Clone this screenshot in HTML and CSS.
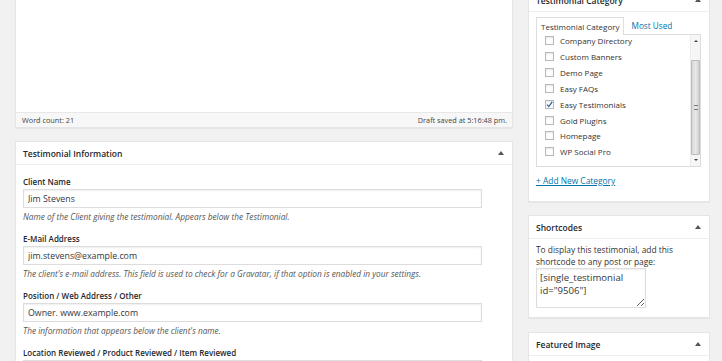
FILE: index.html
```html
<!DOCTYPE html>
<html lang="en">
<head>
    <meta charset="UTF-8">
    <title>Edit Testimonial</title>
    <link rel="stylesheet" href="styles.css">
</head>
<body>

    <div class="wrap">

        <!-- Main column -->
        <div class="main">

            <!-- Editor -->
            <div class="editor">
                <div class="editor-area"></div>
                <div class="status">
                    <span>Word count: 21</span>
                    <span>Draft saved at 5:16:48 pm.</span>
                </div>
            </div>

            <!-- Testimonial Information -->
            <div class="postbox">
                <div class="postbox-head">
                    <h2>Testimonial Information</h2>
                    <span class="toggle"></span>
                </div>
                <div class="fields">
                    <div class="field">
                        <label>Client Name</label>
                        <input type="text" value="Jim Stevens">
                        <p>Name of the Client giving the testimonial. Appears below the Testimonial.</p>
                    </div>
                    <div class="field">
                        <label>E-Mail Address</label>
                        <input type="text" value="jim.stevens@example.com">
                        <p>The client's e-mail address. This field is used to check for a Gravatar, if that option is enabled in your settings.</p>
                    </div>
                    <div class="field">
                        <label>Position / Web Address / Other</label>
                        <input type="text" value="Owner. www.example.com">
                        <p>The information that appears below the client's name.</p>
                    </div>
                    <div class="field">
                        <label>Location Reviewed / Product Reviewed / Item Reviewed</label>
                        <input type="text" value="">
                    </div>
                </div>
            </div>
        </div>

        <!-- Sidebar -->
        <div class="side">

            <div class="postbox">
                <div class="postbox-head side-head">
                    <h2>Testimonial Category</h2>
                    <span class="toggle"></span>
                </div>
                <div class="cat-body">
                    <div class="tabs">
                        <span class="tab-active">Testimonial Category</span>
                        <a class="tab-link">Most Used</a>
                    </div>
                    <div class="panel">
                        <ul class="cats">
                            <li><span class="cb"></span>Company Directory</li>
                            <li><span class="cb"></span>Custom Banners</li>
                            <li><span class="cb"></span>Demo Page</li>
                            <li><span class="cb"></span>Easy FAQs</li>
                            <li><span class="cb"><svg width="9" height="9" viewBox="0 0 9 9"><path d="M2 4.6 L3.8 6.6 L7.2 1.8" fill="none" stroke="#2a5a8c" stroke-width="1.2"/></svg></span>Easy Testimonials</li>
                            <li><span class="cb"></span>Gold Plugins</li>
                            <li><span class="cb"></span>Homepage</li>
                            <li><span class="cb"></span>WP Social Pro</li>
                        </ul>
                        <div class="scrollbar">
                            <div class="sb-btn"><span class="sb-up"></span></div>
                            <div class="sb-track">
                                <div class="sb-thumb"><span class="grip"></span></div>
                            </div>
                            <div class="sb-btn"><span class="sb-down"></span></div>
                        </div>
                    </div>
                    <a class="add-new">+ Add New Category</a>
                </div>
            </div>

            <div class="postbox shortcodes">
                <div class="postbox-head side-head">
                    <h2>Shortcodes</h2>
                    <span class="toggle"></span>
                </div>
                <div class="sc-body">
                    <p>To display this testimonial, add this shortcode to any post or page:</p>
                    <textarea readonly>[single_testimonial id="9506"]</textarea>
                </div>
            </div>

            <div class="postbox">
                <div class="postbox-head side-head">
                    <h2>Featured Image</h2>
                    <span class="toggle"></span>
                </div>
                <div class="fi-body"></div>
            </div>
        </div>
    </div>

</body>
</html>
```

FILE: styles.css
```css
body { margin: 0; background: #f1f1f1; font-family: "Open Sans", "Noto Sans", sans-serif; font-size: 8px; color: #333; overflow: hidden; }
.wrap { display: flex; align-items: flex-start; gap: 15px; padding-left: 15px; margin-top: -12px; }
.main { width: 498px; }
.side { width: 182px; }

/* editor */
.editor { background: #fff; border: 1px solid #e5e5e5; box-shadow: 0 1px 1px rgba(0,0,0,.04); margin-bottom: 13px; }
.editor-area { height: 123px; }
.status { display: flex; justify-content: space-between; height: 14px; line-height: 14px; padding: 0 5px 0 6px; background: #f7f7f7; border-top: 1px solid #e8e8e8; font-size: 7.3px; color: #444; }

/* boxes */
.postbox { background: #fff; border: 1px solid #e5e5e5; box-shadow: 0 1px 1px rgba(0,0,0,.04); margin-bottom: 13px; }
.postbox-head { display: flex; justify-content: space-between; align-items: center; height: 22px; padding: 0 8px 0 7px; border-bottom: 1px solid #eee; }
.postbox-head h2 { margin: 0; font-size: 8.5px; font-weight: 600; color: #23282d; }
.side-head { padding-right: 8px; }
.toggle { width: 0; height: 0; border-left: 3px solid transparent; border-right: 3px solid transparent; border-bottom: 4px solid #555; }

/* testimonial fields */
.fields { padding: 11px 7px 0 7px; }
.field label { display: block; font-size: 8px; font-weight: 600; line-height: 12px; color: #23282d; margin-bottom: 1px; }
.field input { display: block; box-sizing: border-box; width: 459px; height: 19px; margin: 0; padding: 0 4px; border: 1px solid #ddd; box-shadow: inset 0 1px 2px rgba(0,0,0,.07); font-family: inherit; font-size: 8.8px; color: #32373c; background: #fff; }
.field p { margin: 3px 0 10px; font-size: 8.3px; font-style: italic; line-height: 12px; color: #555; }

/* category */
.cat-body { padding: 5px 8px 14px 7px; }
.tabs { display: flex; align-items: flex-end; height: 17px; }
.tab-active { position: relative; z-index: 1; background: #fff; border: 1px solid #dfdfdf; border-bottom: none; padding: 0 3px 0 4px; line-height: 17px; margin-bottom: -1px; color: #333; }
.tab-link { margin-left: 8px; line-height: 16px; font-size: 8.2px; color: #0073aa; }
.panel { display: flex; box-sizing: border-box; width: 165px; height: 133px; border: 1px solid #ddd; background: #fff; overflow: hidden; }
.cats { flex: 1; list-style: none; margin: -2px 0 0; padding: 0 0 0 8px; }
.cats li { display: flex; align-items: center; gap: 6px; height: 15.85px; font-size: 8px; color: #333; }
.cb { display: block; box-sizing: border-box; width: 9px; height: 9px; border: 1px solid #b4b9be; background: #fff; box-shadow: inset 0 1px 2px rgba(0,0,0,.1); }
.cb svg { display: block; margin: -1px 0 0 -1px; }

/* scrollbar */
.scrollbar { display: flex; flex-direction: column; width: 9px; background: #f6f6f6; border-left: 1px solid #ececec; }
.sb-btn { display: flex; align-items: center; justify-content: center; height: 12px; }
.sb-up { width: 0; height: 0; border-left: 2px solid transparent; border-right: 2px solid transparent; border-bottom: 2px solid #444; }
.sb-down { width: 0; height: 0; border-left: 2px solid transparent; border-right: 2px solid transparent; border-top: 2px solid #444; }
.sb-track { flex: 1; }
.sb-thumb { display: flex; align-items: center; justify-content: center; box-sizing: border-box; height: 95px; margin: 13px 0 0 0; border: 1px solid #bcbcbc; border-radius: 1px; background: linear-gradient(to right, #d6d6d6, #e8e8e8 50%, #d0d0d0); }
.grip { width: 4px; height: 3px; border-top: 1px solid #777; border-bottom: 1px solid #777; }
.add-new { display: inline-block; margin-top: 8px; line-height: 12px; font-size: 8.4px; color: #0073aa; text-decoration: underline; }

/* shortcodes */
.shortcodes { margin-bottom: 14px; }
.sc-body { padding: 5px 8px 9px 7px; }
.sc-body p { margin: 0; font-size: 8.4px; line-height: 12px; color: #333; }
.sc-body textarea { display: block; box-sizing: border-box; width: 110px; height: 40px; margin: 0; padding: 2px 3px; border: 1px solid #ddd; box-shadow: inset 0 1px 2px rgba(0,0,0,.07); font-family: inherit; font-size: 9.6px; line-height: 13px; color: #32373c; resize: both; overflow: hidden; }

.fi-body { height: 40px; }
```
